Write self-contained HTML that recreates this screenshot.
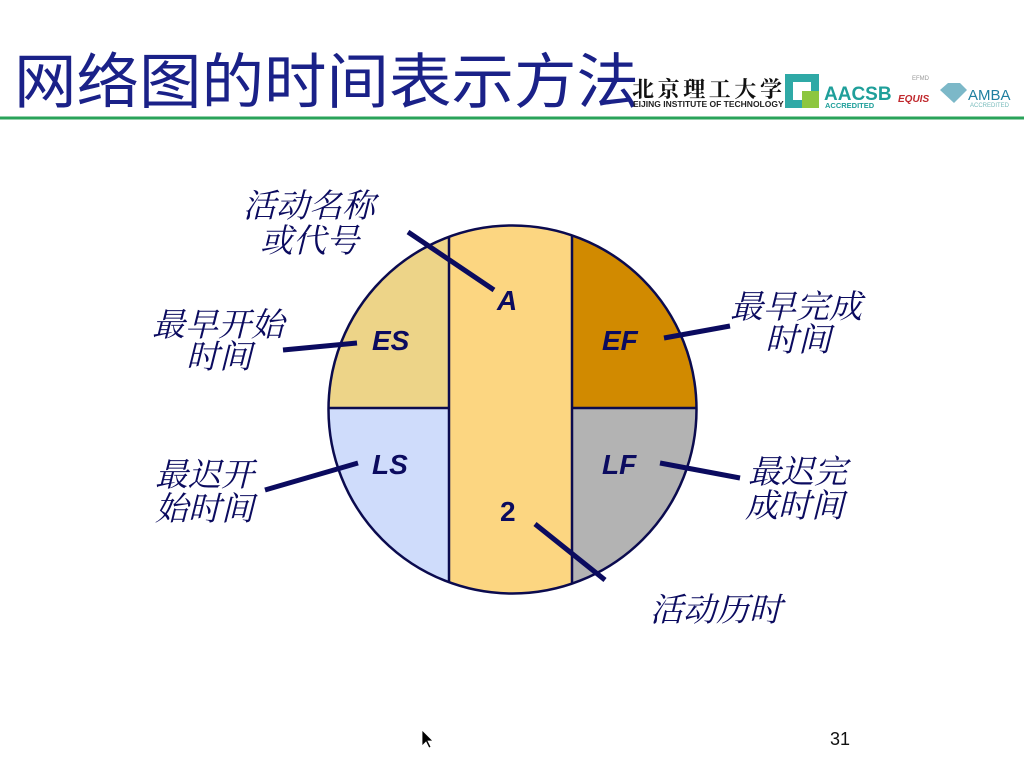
<!DOCTYPE html>
<html><head><meta charset="utf-8"><style>
html,body{margin:0;padding:0;background:#fff;}
body{width:1024px;height:768px;position:relative;overflow:hidden;font-family:"Liberation Sans","Noto Sans CJK SC",sans-serif;}
</style></head><body>
<svg width="1024" height="768" xmlns="http://www.w3.org/2000/svg" style="position:absolute;left:0;top:0">
<defs><clipPath id="c"><circle cx="512.5" cy="409.5" r="184"/></clipPath></defs>
<text x="14" y="103" font-family="Noto Sans CJK SC,sans-serif" font-size="60" fill="#1a2188" textLength="625" lengthAdjust="spacingAndGlyphs">网络图的时间表示方法</text>
<line x1="0" y1="118" x2="1024" y2="118" stroke="#2aa35a" stroke-width="3"/>
<text x="632" y="97" font-family="Noto Serif CJK SC,serif" font-size="22" font-weight="bold" fill="#111" textLength="150">北京理工大学</text>
<text x="633" y="107" font-size="8.5" font-weight="bold" fill="#222">EIJING INSTITUTE OF TECHNOLOGY</text>
<rect x="785" y="74" width="34" height="34" fill="#2fa9a6"/><rect x="793" y="82" width="18" height="18" fill="#fff"/><rect x="802" y="91" width="17" height="17" fill="#8dc63f"/>
<text x="824" y="100" font-size="19" font-weight="bold" fill="#1f9f9a">AACSB</text>
<text x="825" y="108" font-size="7.5" font-weight="bold" fill="#1f9f9a">ACCREDITED</text>
<text x="898" y="102" font-size="10" font-style="italic" font-weight="bold" fill="#c0282d">EQUIS</text>
<text x="912" y="80" font-size="6" fill="#999">EFMD</text>
<path d="M940 90 l8-7 h12 l7 7 -13 13z" fill="#7cb8c8"/>
<text x="968" y="100" font-size="15" fill="#1f7fa0">AMBA</text>
<text x="970" y="107" font-size="6" fill="#7bb">ACCREDITED</text>
<g clip-path="url(#c)">
<rect x="320" y="220" width="130" height="189" fill="#edd488"/>
<rect x="320" y="409" width="130" height="200" fill="#cfdcfb"/>
<rect x="449" y="220" width="123" height="380" fill="#fcd681"/>
<rect x="572" y="220" width="130" height="189" fill="#d18a00"/>
<rect x="572" y="409" width="130" height="200" fill="#b3b3b3"/>
<g stroke="#0b0b4f" stroke-width="2.5"><line x1="449" y1="220" x2="449" y2="600"/><line x1="572" y1="220" x2="572" y2="600"/><line x1="320" y1="408" x2="449" y2="408"/><line x1="572" y1="408" x2="702" y2="408"/></g>
</g>
<circle cx="512.5" cy="409.5" r="184" fill="none" stroke="#0b0b4f" stroke-width="2.5"/>
<g font-size="28" font-weight="bold" font-style="italic" fill="#0b0b5f">
<text x="372" y="350">ES</text><text x="602" y="350">EF</text><text x="372" y="474">LS</text><text x="602" y="474">LF</text><text x="497" y="310">A</text><text x="500" y="521" font-style="normal">2</text></g>
<g stroke="#0b0b5f" stroke-width="5"><line x1="408" y1="232" x2="494" y2="290"/><line x1="283" y1="350" x2="357" y2="343"/><line x1="664" y1="338" x2="730" y2="326"/><line x1="265" y1="490" x2="358" y2="463"/><line x1="660" y1="463" x2="740" y2="478"/><line x1="535" y1="524" x2="605" y2="580"/></g>
<g font-family="Noto Serif CJK SC,serif" font-size="33" font-style="italic" fill="#0b0b5f">
<text x="243" y="217">活动名称</text><text x="260" y="252">或代号</text>
<text x="152" y="336">最早开始</text><text x="186" y="368">时间</text>
<text x="730" y="318">最早完成</text><text x="765" y="351">时间</text>
<text x="155" y="486">最迟开</text><text x="155" y="520">始时间</text>
<text x="748" y="483">最迟完</text><text x="745" y="517">成时间</text>
<text x="650" y="621">活动历时</text></g>
<text x="830" y="745" font-size="18" fill="#111">31</text>
<path d="M422 730 v16 l4-4 3 6 2-1 -3-6 h5z" fill="#000" stroke="#fff" stroke-width="0.8"/>
</svg>
</body></html>
